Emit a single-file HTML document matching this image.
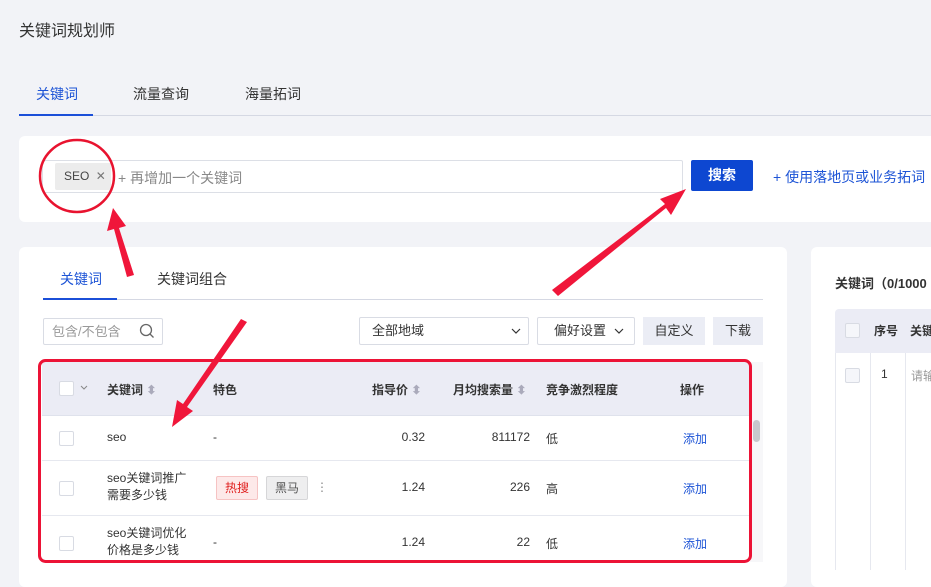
<!DOCTYPE html>
<html><head><meta charset="utf-8"><style>
*{box-sizing:border-box;margin:0;padding:0}
body{width:931px;height:570px;overflow:hidden;background:#f2f3f7;font-family:"Liberation Sans","Noto Sans CJK SC",sans-serif;color:#333;position:relative;font-size:13px}
.a{position:absolute;white-space:nowrap}
.card{position:absolute;background:#fff;border-radius:6px}
.cb{position:absolute;width:15px;height:15px;border:1px solid #d8dbe3;background:#fff;border-radius:2px}
.sel{position:absolute;border:1px solid #d9dce4;border-radius:2px;background:#fff;font-size:13px;line-height:26px;padding-left:12px}
.row{position:absolute;left:42px;width:708px;border-bottom:1px solid #e6e8ef}
.blue{color:#1d54d6}
.r{text-align:right}
.h{font-weight:600;font-size:12px}
</style></head><body>
<div class="a" style="left:19px;top:17px;font-size:16px;color:#333">关键词规划师</div>
<div class="a blue" style="left:36px;top:84px;font-size:14px">关键词</div>
<div class="a" style="left:133px;top:84px;font-size:14px">流量查询</div>
<div class="a" style="left:245px;top:84px;font-size:14px">海量拓词</div>
<div class="a" style="left:19px;top:115px;width:912px;height:1px;background:#d5d8e3"></div>
<div class="a" style="left:19px;top:114px;width:74px;height:2px;background:#1b4fd8"></div>

<div class="card" style="left:19px;top:136px;width:930px;height:86px"></div>
<div class="a" style="left:42px;top:160px;width:641px;height:33px;border:1px solid #dcdfe6;border-radius:2px;background:#fff"></div>
<div class="a" style="left:55px;top:163px;width:56px;height:27px;background:#ececec;border-radius:2px;font-size:12px;line-height:27px;padding-left:9px;color:#444">SEO <span style="color:#777;margin-left:3px">✕</span></div>
<div class="a" style="left:118px;top:168px;font-size:14px;color:#888">+ 再增加一个关键词</div>
<div class="a" style="left:691px;top:160px;width:62px;height:31px;background:#0d47d1;border-radius:2px;color:#fff;font-size:14px;font-weight:bold;text-align:center;line-height:31px">搜索</div>
<div class="a blue" style="left:773px;top:167px;font-size:14px">+ 使用落地页或业务拓词</div>

<div class="card" style="left:19px;top:247px;width:768px;height:340px"></div>
<div class="card" style="left:811px;top:247px;width:140px;height:340px"></div>
<div class="a blue" style="left:60px;top:269px;font-size:14px">关键词</div>
<div class="a" style="left:157px;top:269px;font-size:14px">关键词组合</div>
<div class="a" style="left:43px;top:299px;width:720px;height:1px;background:#d5d8e3"></div>
<div class="a" style="left:43px;top:298px;width:74px;height:2px;background:#1b4fd8"></div>
<div class="sel" style="left:43px;top:318px;width:120px;height:27px;color:#999;padding-left:8px">包含/不包含</div>
<svg class="a" style="left:139px;top:323px" width="16" height="16"><circle cx="7" cy="7" r="5.5" stroke="#666" stroke-width="1.3" fill="none"/><path d="M11 11l3.5 3.5" stroke="#666" stroke-width="1.3"/></svg>
<div class="sel" style="left:359px;top:317px;width:170px;height:28px">全部地域</div>
<svg class="a" style="left:511px;top:327px" width="10" height="8"><path d="M1 2l4 4 4-4" stroke="#333" fill="none" stroke-width="1.2"/></svg>
<div class="sel" style="left:537px;top:317px;width:98px;height:28px;padding-left:16px">偏好设置</div>
<svg class="a" style="left:614px;top:327px" width="10" height="8"><path d="M1 2l4 4 4-4" stroke="#333" fill="none" stroke-width="1.2"/></svg>
<div class="a" style="left:643px;top:317px;width:62px;height:28px;background:#ebedf5;text-align:center;line-height:28px">自定义</div>
<div class="a" style="left:713px;top:317px;width:50px;height:28px;background:#ebedf5;text-align:center;line-height:28px">下载</div>

<div class="a" style="left:42px;top:362px;width:708px;height:54px;background:#ebecf5;border-bottom:1px solid #dfe2ec"></div>
<div class="cb" style="left:59px;top:381px"></div>
<svg class="a" style="left:80px;top:385px" width="8" height="6"><path d="M1 1l3 3 3-3" stroke="#888" fill="none"/></svg>
<div class="a h" style="left:107px;top:381px">关键词 <span style="color:#aab">⬍</span></div>
<div class="a h" style="left:213px;top:381px">特色</div>
<div class="a h" style="left:372px;top:381px">指导价 <span style="color:#aab">⬍</span></div>
<div class="a h" style="left:453px;top:381px">月均搜索量 <span style="color:#aab">⬍</span></div>
<div class="a h" style="left:546px;top:381px">竞争激烈程度</div>
<div class="a h" style="left:680px;top:381px">操作</div>
<div class="a" style="left:750px;top:362px;width:13px;height:200px;background:#f7f7f9"></div>
<div class="a" style="left:753px;top:420px;width:7px;height:22px;background:#c8c8cc;border-radius:4px"></div>

<div class="row" style="top:416px;height:45px"></div>
<div class="row" style="top:461px;height:55px"></div>
<div class="cb" style="left:59px;top:431px"></div>
<div class="a" style="left:107px;top:430px;font-size:12px">seo</div>
<div class="a" style="left:213px;top:430px;font-size:12px">-</div>
<div class="a r" style="left:365px;width:60px;top:430px;font-size:12px">0.32</div>
<div class="a r" style="left:460px;width:70px;top:430px;font-size:12px">811172</div>
<div class="a" style="left:546px;top:430px;font-size:12px">低</div>
<div class="a blue" style="left:683px;top:430px;font-size:12px">添加</div>

<div class="cb" style="left:59px;top:481px"></div>
<div class="a" style="left:107px;top:470px;font-size:12px;line-height:17px">seo关键词推广<br>需要多少钱</div>
<div class="a" style="left:216px;top:476px;width:42px;height:24px;background:#fde9e9;border:1px solid #f6c3c3;border-radius:2px;color:#e0201f;font-size:12px;text-align:center;line-height:22px">热搜</div>
<div class="a" style="left:266px;top:476px;width:42px;height:24px;background:#eeeeef;border:1px solid #d6d6d8;border-radius:2px;color:#555;font-size:12px;text-align:center;line-height:22px">黑马</div>
<div class="a" style="left:316px;top:480px;font-size:12px;color:#888">⋮</div>
<div class="a r" style="left:365px;width:60px;top:480px;font-size:12px">1.24</div>
<div class="a r" style="left:460px;width:70px;top:480px;font-size:12px">226</div>
<div class="a" style="left:546px;top:480px;font-size:12px">高</div>
<div class="a blue" style="left:683px;top:480px;font-size:12px">添加</div>

<div class="cb" style="left:59px;top:536px"></div>
<div class="a" style="left:107px;top:525px;font-size:12px;line-height:17px">seo关键词优化<br>价格是多少钱</div>
<div class="a" style="left:213px;top:535px;font-size:12px">-</div>
<div class="a r" style="left:365px;width:60px;top:535px;font-size:12px">1.24</div>
<div class="a r" style="left:460px;width:70px;top:535px;font-size:12px">22</div>
<div class="a" style="left:546px;top:535px;font-size:12px">低</div>
<div class="a blue" style="left:683px;top:535px;font-size:12px">添加</div>

<div class="a" style="left:835px;top:273px;font-size:13px;font-weight:600">关键词（0/1000</div>
<div class="a" style="left:835px;top:309px;width:100px;height:44px;background:#ebecf5;border-radius:4px 0 0 0"></div>
<div class="cb" style="left:845px;top:323px;background:#f5f6fa"></div>
<div class="a h" style="left:874px;top:322px">序号</div>
<div class="a h" style="left:910px;top:322px">关键</div>
<div class="a" style="left:870px;top:353px;width:1px;height:217px;background:#e6e8ef"></div>
<div class="a" style="left:905px;top:353px;width:1px;height:217px;background:#e6e8ef"></div>
<div class="a" style="left:835px;top:353px;width:1px;height:217px;background:#e6e8ef"></div>
<div class="cb" style="left:845px;top:368px;background:#f5f6fa"></div>
<div class="a" style="left:881px;top:367px;font-size:12px">1</div>
<div class="a" style="left:911px;top:367px;font-size:12px;color:#999">请输</div>

<svg class="a" style="left:0;top:0" width="931" height="570">
<rect x="39.5" y="360.5" width="711" height="201" rx="6" fill="none" stroke="#ec1336" stroke-width="3"/>
<ellipse cx="77" cy="176" rx="37" ry="36" fill="none" stroke="#e8132f" stroke-width="2.5"/>
<g fill="#f0163a">
<polygon points="127,277 134,275 119,228 126,226 113,208 107,231 114,229"/>
<polygon points="552,290 558,296 666,208 671,215 686,189 660,199 665,204"/>
<polygon points="247,322 241,319 183,404 177,400 172,427 193,411 187,407"/>
</g>
</svg>
</body></html>
